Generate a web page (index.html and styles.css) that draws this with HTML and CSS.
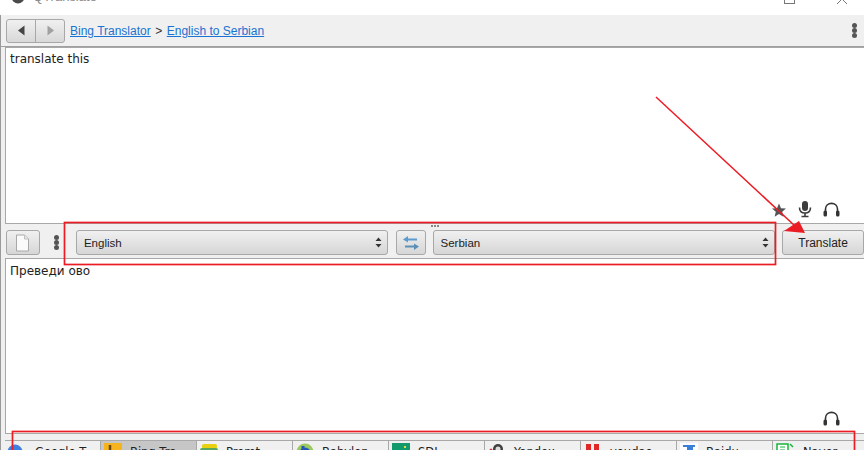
FILE: index.html
```html
<!DOCTYPE html>
<html lang="en">
<head>
<meta charset="utf-8">
<title>QTranslate</title>
<link rel="stylesheet" href="styles.css">
</head>
<body>
<div class="window">
  <header class="titlebar">
    <svg class="app-icon" width="15" height="14" viewBox="0 0 15 14"><circle cx="8" cy="4" r="6.5" fill="#4a4a4a"/><circle cx="2.5" cy="2" r="2" fill="#8a8a8a"/></svg>
    <span class="app-title">QTranslate</span>
    <span class="spacer"></span>
    <span class="win-max"></span>
    <svg class="win-close" width="12" height="5" viewBox="0 0 12 5"><path d="M1 5 L6 0 L11 5" fill="none" stroke="#777" stroke-width="1"/></svg>
  </header>

  <nav class="toolbar">
    <div class="nav-group">
      <button class="nav-btn"><svg width="9" height="11" viewBox="0 0 9 11"><path d="M7.5 0.5 V10.5 L1 5.5 Z" fill="#444"/></svg></button>
      <button class="nav-btn"><svg width="9" height="11" viewBox="0 0 9 11"><path d="M1.5 0.5 V10.5 L8 5.5 Z" fill="#a0a0a0"/></svg></button>
    </div>
    <div class="crumbs"><a>Bing Translator</a><span class="crumb-sep">&gt;</span><a>English to Serbian</a></div>
    <span class="spacer"></span>
    <span class="dots"><i></i><i></i><i></i></span>
  </nav>

  <section class="pane pane-top">
    <div class="pane-text">translate this</div>
    <div class="pane-icons">
      <svg width="16" height="16" viewBox="0 0 16 16"><path d="M8 1.5 L10 6.2 L15 6.6 L11.2 9.8 L12.4 14.7 L8 12 L3.6 14.7 L4.8 9.8 L1 6.6 L6 6.2 Z" fill="#555"/></svg>
      <svg width="16" height="18" viewBox="0 0 16 18"><rect x="5" y="1" width="6" height="10" rx="3" fill="#3c3c3c"/><path d="M2.5 7.5 C2.5 11.5 5 13 8 13 C11 13 13.5 11.5 13.5 7.5" fill="none" stroke="#3c3c3c" stroke-width="1.6"/><path d="M8 13 V16.5 M4.5 16.5 H11.5" stroke="#3c3c3c" stroke-width="1.6" fill="none"/></svg>
      <svg width="17" height="16" viewBox="0 0 17 16"><use href="#phones"/></svg>
    </div>
  </section>

  <div class="splitter"><i></i><i></i><i></i></div>

  <div class="lang-row">
    <button class="btn btn-new"><svg width="15" height="18" viewBox="0 0 15 18"><path d="M1.5 1 H9.5 L13.5 5 V17 H1.5 Z" fill="#fafafa" stroke="#a8a8a8"/><path d="M9.5 1 V5 H13.5" fill="#e4e4e4" stroke="#c0c0c0"/></svg></button>
    <span class="dots dots-row"><i></i><i></i><i></i></span>
    <div class="combo combo-from"><span>English</span><svg width="7" height="11" viewBox="0 0 7 11"><path d="M3.5 0.5 L6.5 4 H0.5 Z M3.5 10.5 L6.5 7 H0.5 Z" fill="#333"/></svg></div>
    <button class="btn btn-swap"><svg width="18" height="16" viewBox="0 0 18 16"><path d="M6 1 L1 4.5 L6 7.5 V5.5 H15 V3.5 H6 Z" fill="#5c9bd0"/><path d="M12 8.5 L17 11.5 L12 15 V12.5 H3 V10.5 H12 Z" fill="#5c8fb8"/></svg></button>
    <div class="combo combo-to"><span>Serbian</span><svg width="7" height="11" viewBox="0 0 7 11"><path d="M3.5 0.5 L6.5 4 H0.5 Z M3.5 10.5 L6.5 7 H0.5 Z" fill="#333"/></svg></div>
    <button class="btn btn-translate">Translate</button>
  </div>

  <section class="pane pane-bottom">
    <div class="pane-text">Преведи ово</div>
    <div class="pane-icons">
      <svg width="17" height="16" viewBox="0 0 17 16"><use href="#phones"/></svg>
    </div>
  </section>

  <div class="tabs">
    <div class="tab tab-first"><svg width="16" height="18" viewBox="0 0 16 18"><circle cx="8" cy="9" r="7.5" fill="#3f7fe0"/></svg><span>Google T</span></div>
    <div class="tab tab-active"><svg width="18" height="18" viewBox="0 0 18 18"><rect width="18" height="18" fill="#f5b41e"/><path d="M6 2 V14 M6 8 L12 11" stroke="#6b4a10" stroke-width="2.5" fill="none"/></svg><span>Bing Tra</span></div>
    <div class="tab"><svg width="18" height="18" viewBox="0 0 18 18"><rect x="2" y="1" width="15" height="5" rx="2" fill="#e8d010"/><rect x="0" y="5" width="18" height="4" rx="2" fill="#58a860"/><circle cx="9" cy="13" r="5" fill="#70b0e0"/></svg><span>Promt</span></div>
    <div class="tab"><svg width="18" height="18" viewBox="0 0 18 18"><circle cx="9" cy="9" r="8.5" fill="#9cc860"/><circle cx="9" cy="10" r="5.5" fill="#2458b8"/><path d="M7 3 V10" stroke="#2458b8" stroke-width="3"/></svg><span>Babylon</span></div>
    <div class="tab"><svg width="18" height="18" viewBox="0 0 18 18"><rect width="18" height="18" fill="#129a6c"/><rect x="12" y="3" width="2" height="2" fill="#e8d840"/></svg><span>SDL</span></div>
    <div class="tab"><svg width="18" height="18" viewBox="0 0 18 18"><circle cx="10" cy="6" r="5" fill="#404040"/><circle cx="10" cy="6" r="2.5" fill="#ddd"/><circle cx="3" cy="7" r="1.5" fill="#c84040"/></svg><span>Yandex</span></div>
    <div class="tab"><svg width="18" height="18" viewBox="0 0 18 18"><rect x="2" y="1" width="5" height="16" fill="#e02828"/><rect x="10" y="1" width="5" height="16" fill="#e02828"/></svg><span>youdao</span></div>
    <div class="tab"><svg width="18" height="18" viewBox="0 0 18 18"><rect width="18" height="18" fill="#fff"/><rect x="3" y="2" width="12" height="2" fill="#3a80d8"/><rect x="7" y="4" width="6" height="8" fill="#3a80d8"/></svg><span>Baidu</span></div>
    <div class="tab tab-last"><svg width="19" height="18" viewBox="0 0 19 18"><rect x="1" y="1" width="11" height="15" fill="#fff" stroke="#19b33a" stroke-width="1.5"/><path d="M4 4 H9 M4 7 H9" stroke="#19b33a"/><path d="M14 1 L17 4" stroke="#19b33a" stroke-width="1.5"/></svg><span>Naver</span></div>
  </div>
  <span class="edge"></span>
</div>

<svg class="notes" width="864" height="450" viewBox="0 0 864 450">
  <defs>
    <g id="phones"><path d="M2.5 10 V7 C2.5 -0.5 14.5 -0.5 14.5 7 V10" fill="none" stroke="#333" stroke-width="1.6"/><rect x="0.5" y="8.5" width="3.5" height="6" rx="1.5" fill="#333"/><rect x="13" y="8.5" width="3.5" height="6" rx="1.5" fill="#333"/></g>
  </defs>
  <rect x="64.5" y="222.5" width="711" height="42" fill="none" stroke="#ec1c24" stroke-width="1.7"/>
  <rect x="12.5" y="431.5" width="842" height="40" fill="none" stroke="#ec1c24" stroke-width="1.7"/>
  <path d="M656 97 L795 226" stroke="#ec1c24" stroke-width="1.5" fill="none"/>
  <path d="M784 231 L799 221 L805 233 Z" fill="#ec1c24"/>
</svg>
</body>
</html>
```
FILE: styles.css
```css
* { box-sizing: border-box; }
html, body { margin: 0; padding: 0; }
body {
  width: 864px;
  height: 450px;
  overflow: hidden;
  position: relative;
  background: #fff;
  font-family: "Liberation Sans", "DejaVu Sans", sans-serif;
  font-size: 12px;
  color: #222;
}
.window {
  position: relative;
  display: flex;
  flex-direction: column;
  height: 450px;
  overflow: hidden;
  background: #f0f0f0;
}
.spacer { flex: 1; }

.titlebar {
  flex: 0 0 15px;
  display: flex;
  align-items: flex-start;
  background: #fff;
  overflow: hidden;
  padding: 0 16px 0 10px;
}
.app-icon { margin-top: -7px; }
.app-title {
  margin: -11px 0 0 8px;
  font-size: 13px;
  line-height: 16px;
  color: #8a8a8a;
}
.win-max {
  width: 11px;
  height: 4px;
  margin: 0 41px 0 0;
  border: 1px solid #777;
  border-top: 0;
}
.win-close { margin-top: -1px; }

.toolbar {
  flex: 0 0 32px;
  display: flex;
  align-items: center;
  padding: 0 7px 0 6px;
  border-bottom: 1px solid #a0a0a0;
  background: #f0f0f0;
}
.nav-group {
  display: flex;
  width: 59px;
  height: 24px;
  border: 1px solid #a8a8a8;
  border-radius: 3px;
  background: linear-gradient(#f0f0f0, #d8d8d8);
}
.nav-btn {
  flex: 1;
  display: flex;
  align-items: center;
  justify-content: center;
  padding: 0;
  border: 0;
  background: transparent;
}
.nav-btn + .nav-btn { border-left: 1px solid #a8a8a8; }
.crumbs { margin-left: 5px; font-size: 12px; color: #333; }
.crumbs a { color: #1a73d0; text-decoration: underline; }
.crumb-sep { margin: 0 4.5px; }

.dots { display: flex; flex-direction: column; }
.dots i { display: block; width: 5px; height: 5px; border-radius: 50%; background: #555; }

.pane {
  display: flex;
  flex-direction: column;
  margin-left: 5px;
  background: #fff;
  border: 1px solid #a8a8a8;
  border-right: 0;
}
.pane-top { flex: 0 0 177px; }
.pane-bottom { flex: 0 0 176px; margin-top: 3px; }
.pane-text {
  flex: 1;
  padding: 4px 4px;
  font-family: "DejaVu Sans", sans-serif;
  font-size: 12px;
  line-height: 15px;
  color: #222;
}
.pane-bottom .pane-text { padding-top: 5px; }
.pane-icons {
  display: flex;
  align-items: flex-end;
  justify-content: flex-end;
  gap: 10px;
  padding: 0 24px 5px 0;
}
.pane-bottom .pane-icons { padding-bottom: 6px; }

.splitter {
  flex: 0 0 6px;
  display: flex;
  justify-content: center;
  align-items: flex-start;
  gap: 1px;
  padding: 1px 0 0 5px;
}
.splitter i { width: 2px; height: 2px; background: #888; }

.lang-row {
  flex: 0 0 25px;
  display: flex;
  align-items: stretch;
  padding-left: 6px;
}
.btn, .combo {
  border: 1px solid #a8a8a8;
  border-radius: 3px;
  background: linear-gradient(#f0f0f0, #d6d6d6);
  font: inherit;
  color: #222;
}
.btn { display: flex; align-items: center; justify-content: center; padding: 0; }
.btn-new { width: 34px; margin-right: 14px; }
.dots-row { justify-content: center; margin-right: 17px; }
.combo {
  display: flex;
  align-items: center;
  justify-content: space-between;
  padding: 0 5px 0 7px;
  font-size: 11.5px;
}
.combo-from { width: 312px; }
.combo-to { width: 343px; }
.btn-swap { width: 30px; margin: 0 7px 0 8px; }
.btn-translate { width: 82px; margin-left: 7px; }

.tabs {
  flex: 1;
  display: flex;
  margin: 6px 0 0 5px;
  border-top: 1px solid #a8a8a8;
}
.tab {
  flex: 0 0 96px;
  display: flex;
  align-items: flex-start;
  gap: 8px;
  padding: 0 0 0 3px;
  border-left: 1px solid #a8a8a8;
  background: #f0f0f0;
  overflow: hidden;
}
.tab-first { flex-basis: 95px; padding-left: 2px; border-left: 0; gap: 12px; }
.tab-active { background: #c6c6c6; }
.tab-last { flex: 1; }
.tab svg { flex: none; margin-top: 2px; }
.tab span {
  margin-top: 4px;
  font-family: "DejaVu Sans", sans-serif;
  font-size: 11.5px;
  line-height: 14px;
  color: #222;
}

.edge {
  position: absolute;
  left: 0;
  top: 15px;
  bottom: 0;
  width: 1px;
  background: #9a9a9a;
}

.notes { position: absolute; left: 0; top: 0; pointer-events: none; }
```
